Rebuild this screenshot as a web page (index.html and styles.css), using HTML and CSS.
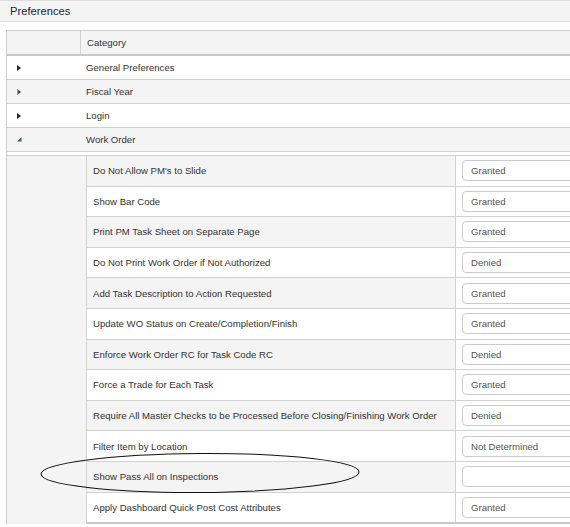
FILE: index.html
```html
<!DOCTYPE html>
<html>
<head>
<meta charset="utf-8">
<link rel="stylesheet" href="styles.css">
</head>
<body>
<div class="titlebar">Preferences</div>
<div class="table">
  <div class="row head">
    <div class="c-icon"></div>
    <div class="c-name">Category</div>
  </div>
  <div class="row cat">
    <div class="c-icon"><svg class="arrow" width="5" height="6" viewBox="0 0 5 6"><polygon points="0,0 4,3 0,6" fill="#222"/></svg></div>
    <div class="c-name">General Preferences</div>
  </div>
  <div class="row cat alt">
    <div class="c-icon"><svg class="arrow" width="5" height="6" viewBox="0 0 5 6"><polygon points="0,0 4,3 0,6" fill="#1f3550"/><polygon points="0,0 1.3,1 1.3,5 0,6" fill="#f08a1c"/></svg></div>
    <div class="c-name">Fiscal Year</div>
  </div>
  <div class="row cat">
    <div class="c-icon"><svg class="arrow" width="5" height="6" viewBox="0 0 5 6"><polygon points="0,0 4,3 0,6" fill="#222"/></svg></div>
    <div class="c-name">Login</div>
  </div>
  <div class="row cat alt">
    <div class="c-icon"><svg class="arrow" width="5" height="5" viewBox="0 0 5 5"><polygon points="4.5,0 4.5,4.5 0,4.5" fill="#2d5f8f"/></svg></div>
    <div class="c-name">Work Order</div>
  </div>
  <div class="spacer"></div>
  <div class="expanded">
    <div class="gutter"></div>
    <div class="sub">
      <div class="srow alt"><div class="s-name">Do Not Allow PM's to Slide</div><div class="s-val"><div class="select">Granted</div></div></div>
      <div class="srow"><div class="s-name">Show Bar Code</div><div class="s-val"><div class="select">Granted</div></div></div>
      <div class="srow alt"><div class="s-name">Print PM Task Sheet on Separate Page</div><div class="s-val"><div class="select">Granted</div></div></div>
      <div class="srow"><div class="s-name">Do Not Print Work Order if Not Authorized</div><div class="s-val"><div class="select">Denied</div></div></div>
      <div class="srow alt"><div class="s-name">Add Task Description to Action Requested</div><div class="s-val"><div class="select">Granted</div></div></div>
      <div class="srow"><div class="s-name">Update WO Status on Create/Completion/Finish</div><div class="s-val"><div class="select">Granted</div></div></div>
      <div class="srow alt"><div class="s-name">Enforce Work Order RC for Task Code RC</div><div class="s-val"><div class="select">Denied</div></div></div>
      <div class="srow"><div class="s-name">Force a Trade for Each Task</div><div class="s-val"><div class="select">Granted</div></div></div>
      <div class="srow alt"><div class="s-name">Require All Master Checks to be Processed Before Closing/Finishing Work Order</div><div class="s-val"><div class="select">Denied</div></div></div>
      <div class="srow"><div class="s-name">Filter Item by Location</div><div class="s-val"><div class="select">Not Determined</div></div></div>
      <div class="srow alt"><div class="s-name">Show Pass All on Inspections</div><div class="s-val"><div class="select"></div></div></div>
      <div class="srow last"><div class="s-name">Apply Dashboard Quick Post Cost Attributes</div><div class="s-val"><div class="select">Granted</div></div></div>
    </div>
  </div>
</div>
<svg class="annot" width="330" height="46" viewBox="0 0 330 46">
  <ellipse cx="160" cy="22" rx="159" ry="19.5" transform="rotate(-0.4 160 22)" fill="none" stroke="#111" stroke-width="1"/>
</svg>
</body>
</html>
```

FILE: styles.css
```css
html, body {
  margin: 0;
  padding: 0;
  background: #fff;
  overflow: hidden;
}
body {
  width: 570px;
  height: 527px;
  position: relative;
  font-family: "Liberation Sans", Arial, sans-serif;
  color: #333;
}
.titlebar {
  height: 20px;
  line-height: 21px;
  border-top: 1px solid #dcdcdc;
  border-bottom: 1px solid #dcdcdc;
  background: #f4f4f4;
  padding-left: 10px;
  font-size: 11.2px;
  color: #1e2630;
  width: 570px;
  box-sizing: content-box;
  max-width: 560px;
}
.table {
  margin: 8px 0 0 6px;
  width: 564px;
  box-sizing: border-box;
  border-left: 1px solid #cfcfcf;
  border-top: 1px solid #cfcfcf;
  font-size: 9.6px;
  overflow: hidden;
}
.row {
  display: flex;
  height: 23px;
  align-items: stretch;
  border-bottom: 1px solid #d2d2d2;
  background: #fff;
}
.row.alt {
  background: #f4f4f4;
}
.row.head {
  background: #f4f4f4;
  border-bottom: 2px solid #c8c8c8;
}
.c-icon {
  width: 73px;
  flex: none;
  display: flex;
  align-items: center;
  padding-left: 10px;
  box-sizing: border-box;
}
.row.head .c-icon {
  border-right: 1px solid #d2d2d2;
  width: 74px;
}
.c-name {
  display: flex;
  align-items: center;
  padding-left: 6px;
}
.arrow {
  display: block;
}
.spacer {
  height: 3px;
  border-bottom: 1px solid #d2d2d2;
}
.expanded {
  display: flex;
}
.gutter {
  width: 79px;
  flex: none;
  background: #f4f4f4;
}
.sub {
  flex: 1;
  min-width: 0;
  border-left: 1px solid #d2d2d2;
}
.srow {
  display: flex;
  height: 29.6px;
  border-bottom: 1px solid #d2d2d2;
  background: #fff;
}
.srow.last {
  border-bottom: 2px solid #c8c8c8;
}
.srow.alt .s-name {
  background: #f4f4f4;
}
.s-name {
  width: 369px;
  flex: none;
  display: flex;
  align-items: center;
  padding-left: 6px;
  box-sizing: border-box;
  border-right: 1px solid #d2d2d2;
}
.s-val {
  flex: 1;
  min-width: 0;
  overflow: hidden;
  display: flex;
  align-items: center;
  padding-left: 6px;
  background: #fff;
}
.select {
  flex: none;
  width: 160px;
  height: 19px;
  line-height: 19px;
  border: 1px solid #cccccc;
  border-radius: 4px;
  padding-left: 8px;
  color: #555;
  background: #fff;
}
.annot {
  position: absolute;
  left: 40px;
  top: 451px;
}
```
